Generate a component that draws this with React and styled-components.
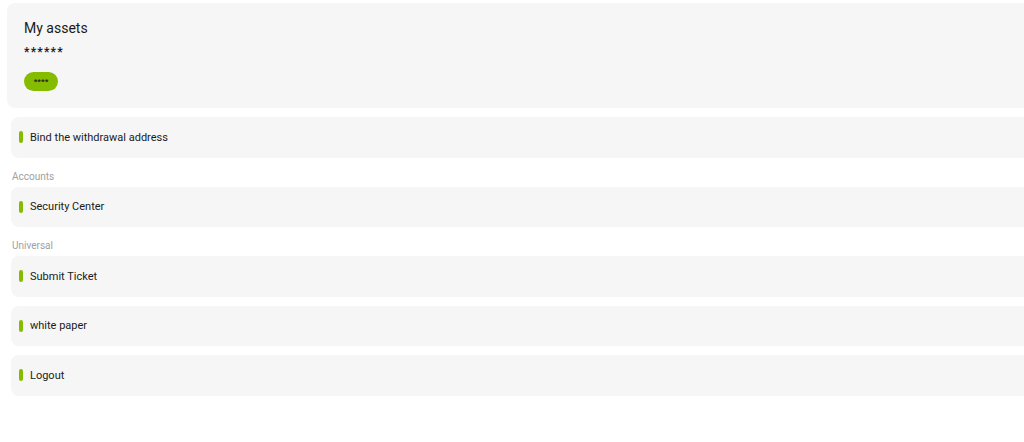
import React from "react";
import styled, { createGlobalStyle } from "styled-components";

const Global = createGlobalStyle`
  html, body { margin: 0; padding: 0; background: #ffffff; }
  body { font-family: Roboto, "Noto Sans", sans-serif; color: #1b1b1b; }
  * { box-sizing: border-box; }
`;

const Page = styled.div`
  width: 1024px;
  height: 442px;
  overflow: hidden;
  padding: 3px 0 0 7px;
  display: flex;
  flex-direction: column;
`;

const AssetsCard = styled.div`
  width: 1040px;
  height: 105px;
  flex-shrink: 0;
  background: #f6f6f6;
  border-radius: 8px;
  padding: 17px 17px 0;
  display: flex;
  flex-direction: column;
  align-items: flex-start;
`;

const Title = styled.div`
  font-size: 14px;
  line-height: 16px;
  font-weight: 400;
  color: #1a1a1a;
`;

const Hidden = styled.div`
  margin-top: 9px;
  font-size: 12px;
  line-height: 14px;
  font-weight: 700;
  letter-spacing: 1.2px;
`;

const Pill = styled.div`
  margin-top: 13px;
  width: 34px;
  height: 19px;
  border-radius: 10px;
  background: #86bc00;
  font-size: 8px;
  font-weight: 700;
  display: flex;
  align-items: center;
  justify-content: center;
  color: #222;
`;

const List = styled.div`
  margin-left: 4px;
  display: flex;
  flex-direction: column;
`;

const Row = styled.div`
  width: 1040px;
  height: 40.5px;
  flex-shrink: 0;
  margin-top: ${(p) => (p.$tight ? "0" : "9px")};
  background: #f6f6f6;
  border-radius: 8px;
  display: flex;
  align-items: center;
  padding-left: 8px;
  gap: 7px;
  font-size: 11px;
  color: #1b1b1b;
`;

const Bar = styled.span`
  width: 4px;
  height: 12px;
  border-radius: 2px;
  background: #86bc00;
`;

const SectionLabel = styled.div`
  height: 29px;
  flex-shrink: 0;
  display: flex;
  align-items: flex-end;
  padding: 0 0 4px 1px;
  font-size: 10px;
  line-height: 12px;
  color: #a0a0a0;
`;

const Item = ({ children, tight }) => (
  <Row $tight={tight}>
    <Bar />
    {children}
  </Row>
);

export default function App() {
  return (
    <>
      <Global />
      <Page>
        <AssetsCard>
          <Title>My assets</Title>
          <Hidden>******</Hidden>
          <Pill>****</Pill>
        </AssetsCard>
        <List>
          <Item>Bind the withdrawal address</Item>
          <SectionLabel>Accounts</SectionLabel>
          <Item tight>Security Center</Item>
          <SectionLabel>Universal</SectionLabel>
          <Item tight>Submit Ticket</Item>
          <Item>white paper</Item>
          <Item>Logout</Item>
        </List>
      </Page>
    </>
  );
}
